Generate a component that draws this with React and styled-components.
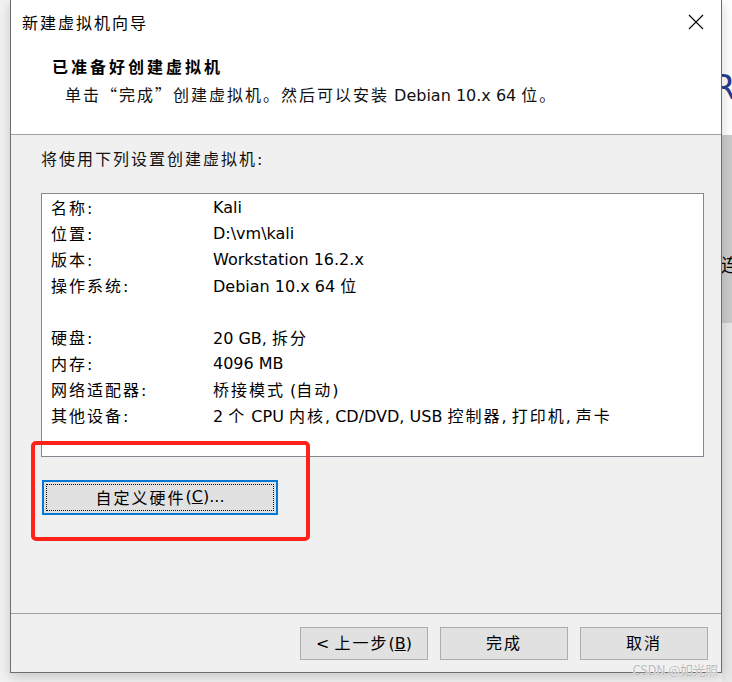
import styled, { createGlobalStyle } from "styled-components";

const GlobalStyle = createGlobalStyle`
  html, body {
    margin: 0;
    padding: 0;
    background: #f2f2f2;
    font-family: "DejaVu Sans", "Noto Sans CJK SC", sans-serif;
    font-size: 16px;
    color: #000;
  }
`;

const getRows = () => [
  { label: "名称:", value: <>Kali</> },
  { label: "位置:", value: <>D:\vm\kali</> },
  { label: "版本:", value: <>Workstation 16.2.x</> },
  { label: "操作系统:", value: <>Debian 10.x 64 <Zh>位</Zh></> },
  { label: "", value: "" },
  { label: "硬盘:", value: <>20 GB, <Zh>拆分</Zh></> },
  { label: "内存:", value: <>4096 MB</> },
  { label: "网络适配器:", value: <><Zh>桥接模式</Zh> (<Zh>自动</Zh>)</> },
  {
    label: "其他设备:",
    value: (
      <>
        2 <Zh>个</Zh> CPU <Zh>内核</Zh>, CD/DVD, USB <Zh>控制器</Zh>, <Zh>打印机</Zh>, <Zh>声卡</Zh>
      </>
    ),
  },
];

function App() {
  const rows = getRows();
  return (
    <>
      <GlobalStyle />
      <Page>
        <Gutter />
        <Dialog>
          <TitleBar>
            <Title>新建虚拟机向导</Title>
            <CloseIcon width="16" height="16" viewBox="0 0 16 16">
              <path d="M1 1 L15 15 M15 1 L1 15" stroke="#000" strokeWidth="1.1" fill="none" />
            </CloseIcon>
          </TitleBar>
          <Header>
            <HeaderTitle>已准备好创建虚拟机</HeaderTitle>
            <HeaderSub>
              <Zh>单击“完成”创建虚拟机。然后可以安装</Zh> Debian 10.x 64 <Zh>位。</Zh>
            </HeaderSub>
          </Header>
          <Body>
            <Intro>将使用下列设置创建虚拟机:</Intro>
            <SummaryBox>
              {rows.map((row, i) => (
                <Row key={i}>
                  <Label>{row.label}</Label>
                  <Value>{row.value}</Value>
                </Row>
              ))}
            </SummaryBox>
            <CustomWrap>
              <CustomButton>
                <FocusRing>
                  <Zh>自定义硬件</Zh>(<u>C</u>)...
                </FocusRing>
              </CustomButton>
              <Annotation />
            </CustomWrap>
          </Body>
          <Footer>
            <Button>
              &lt; <Zh>上一步</Zh>(<u>B</u>)
            </Button>
            <Button>
              <Zh>完成</Zh>
            </Button>
            <Button>
              <Zh>取消</Zh>
            </Button>
          </Footer>
          <Watermark>CSDN @如光照</Watermark>
        </Dialog>
        <Behind>
          <BehindTop>R</BehindTop>
          <BehindMid>连</BehindMid>
          <BehindLow />
        </Behind>
      </Page>
    </>
  );
}

const Zh = styled.span`
  font-family: "Noto Sans CJK SC", sans-serif;
  letter-spacing: 2px;
`;

const Page = styled.div`
  display: flex;
  height: 682px;
  width: 732px;
  overflow: hidden;
`;

const Gutter = styled.div`
  width: 10px;
  flex-shrink: 0;
`;

const Dialog = styled.div`
  position: relative;
  width: 712px;
  height: 673px;
  box-sizing: border-box;
  flex-shrink: 0;
  display: flex;
  flex-direction: column;
  border: 1px solid #6e6e6e;
  border-top: none;
  background: #f0f0f0;
  box-shadow: 0 4px 12px rgba(0, 0, 0, 0.18);
  z-index: 1;
`;

const TitleBar = styled.div`
  height: 44px;
  display: flex;
  align-items: center;
  justify-content: space-between;
  padding: 0 17px 0 11px;
  background: #fff;
`;

const Title = styled.div`
  letter-spacing: 2px;
  font-size: 16px;
`;

const CloseIcon = styled.svg`
  display: block;
`;

const Header = styled.div`
  background: #fff;
  padding: 12px 0 24px;
  border-bottom: 1px solid #a0a0a0;
`;

const HeaderTitle = styled.div`
  padding-left: 41px;
  line-height: 24px;
  font-weight: 700;
  letter-spacing: 3px;
`;

const HeaderSub = styled.div`
  padding-left: 54px;
  margin: 2px 0 2px;
  line-height: 24px;
  color: #111;
`;

const Body = styled.div`
  flex: 1;
  padding: 13px 0 0 30px;
`;

const Intro = styled.div`
  line-height: 24px;
  letter-spacing: 2px;
  color: #111;
  margin-bottom: 21px;
`;

const SummaryBox = styled.div`
  width: 663px;
  height: 264px;
  box-sizing: border-box;
  background: #fff;
  border: 1px solid #828790;
  padding: 0 0 0 9px;
`;

const Row = styled.div`
  display: flex;
  height: 26px;
  align-items: center;
`;

const Label = styled.div`
  width: 162px;
  flex-shrink: 0;
  letter-spacing: 2px;
`;

const Value = styled.div`
  white-space: nowrap;
`;

const CustomWrap = styled.div`
  position: relative;
  margin-top: 23px;
  margin-left: 1px;
`;

const CustomButton = styled.button`
  display: block;
  width: 236px;
  height: 35px;
  padding: 2px;
  box-sizing: border-box;
  background: #e1e1e1;
  border: 2px solid #0078d7;
  font: inherit;
  color: #000;
`;

const FocusRing = styled.span`
  display: flex;
  align-items: center;
  justify-content: center;
  height: 100%;
  box-sizing: border-box;
  padding-bottom: 2px;
  outline: 1px dotted #111;
  outline-offset: -1px;
`;

const Annotation = styled.div`
  position: absolute;
  left: -11px;
  top: -39px;
  width: 279px;
  height: 100px;
  box-sizing: border-box;
  border: 4px solid #ff2218;
  border-radius: 5px;
`;

const Footer = styled.div`
  height: 59px;
  box-sizing: border-box;
  border-top: 1px solid #a0a0a0;
  display: flex;
  justify-content: flex-end;
  align-items: flex-start;
  gap: 12px;
  padding: 13px 13px 0 0;
`;

const Button = styled.button`
  width: 128px;
  height: 33px;
  background: #e1e1e1;
  border: 1px solid #adadad;
  font: inherit;
  color: #000;
  padding: 0 0 3px;
`;

const Watermark = styled.div`
  position: absolute;
  right: 3px;
  bottom: -7px;
  font-family: "Noto Sans CJK SC", sans-serif;
  font-size: 13px;
  letter-spacing: -0.3px;
  color: #b8b8b8;
  text-shadow: 0 0 1px #fff, 0 0 1px #fff;
  z-index: 2;
`;

const Behind = styled.div`
  width: 10px;
  flex-shrink: 0;
  display: flex;
  flex-direction: column;
  overflow: hidden;
`;

const BehindTop = styled.div`
  height: 135px;
  background: #fff;
  box-sizing: border-box;
  padding-top: 68px;
  margin-left: -10px;
  font-family: "DejaVu Sans", sans-serif;
  font-size: 34px;
  line-height: 38px;
  color: #2b3a8f;
`;

const BehindMid = styled.div`
  height: 188px;
  background: #cbcbcb;
  box-sizing: border-box;
  padding-top: 118px;
  margin-left: -1px;
  font-family: "Noto Sans CJK SC", sans-serif;
  font-size: 18px;
  line-height: 22px;
  white-space: nowrap;
`;

const BehindLow = styled.div`
  flex: 1;
  background: #e8e8e8;
`;

export default App;
